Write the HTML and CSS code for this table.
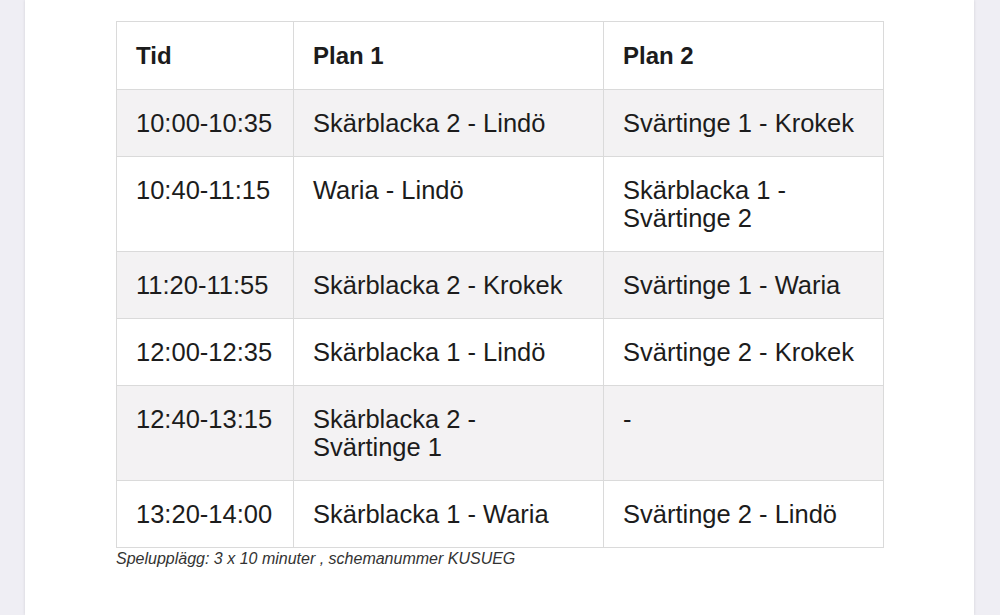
FILE: index.html
```html
<!DOCTYPE html>
<html lang="sv">
<head>
<meta charset="utf-8">
<title>Spelschema</title>
<link rel="stylesheet" href="styles.css">
</head>
<body>
<div class="page">
  <div class="card">
    <table class="schedule">
      <colgroup>
        <col class="c-time">
        <col class="c-plan1">
        <col class="c-plan2">
      </colgroup>
      <thead>
        <tr><th>Tid</th><th>Plan 1</th><th>Plan 2</th></tr>
      </thead>
      <tbody>
        <tr><td>10:00-10:35</td><td>Skärblacka 2 - Lindö</td><td>Svärtinge 1 - Krokek</td></tr>
        <tr><td>10:40-11:15</td><td>Waria - Lindö</td><td>Skärblacka 1 - Svärtinge 2</td></tr>
        <tr><td>11:20-11:55</td><td>Skärblacka 2 - Krokek</td><td>Svärtinge 1 - Waria</td></tr>
        <tr><td>12:00-12:35</td><td>Skärblacka 1 - Lindö</td><td>Svärtinge 2 - Krokek</td></tr>
        <tr><td>12:40-13:15</td><td>Skärblacka 2 - Svärtinge 1</td><td>-</td></tr>
        <tr><td>13:20-14:00</td><td>Skärblacka 1 - Waria</td><td>Svärtinge 2 - Lindö</td></tr>
      </tbody>
    </table>
    <p class="caption">Spelupplägg: 3 x 10 minuter , schemanummer KUSUEG</p>
  </div>
</div>
</body>
</html>
```
FILE: styles.css
```css
html, body {
  margin: 0;
  padding: 0;
  height: 100%;
}
body {
  background: #efeef4;
  font-family: "Liberation Sans", Arial, sans-serif;
  color: #1c1c1c;
}
.page {
  display: flex;
  padding-left: 25px;
  height: 615px;
  overflow: hidden;
}
.card {
  width: 949px;
  background: #fff;
  box-shadow: 0 0 3px rgba(0,0,0,0.12);
  padding: 21px 0 0 91px;
  box-sizing: border-box;
}
.schedule {
  border-collapse: collapse;
  width: 767px;
  table-layout: fixed;
  font-size: 25.5px;
  line-height: 28px;
}
.c-time { width: 177px; }
.c-plan1 { width: 310px; }
.c-plan2 { width: 280px; }
.schedule th,
.schedule td {
  border: 1px solid #dadada;
  padding: 19px 18px 19px 19px;
  text-align: left;
  vertical-align: top;
}
.schedule th {
  font-weight: bold;
  font-size: 24px;
  padding-top: 20px;
  padding-bottom: 19px;
}
.schedule tbody tr:nth-child(odd) td {
  background: #f3f2f3;
}
.caption {
  margin: 2px 0 0 0;
  font-style: italic;
  font-size: 16px;
  color: #333;
}
```
